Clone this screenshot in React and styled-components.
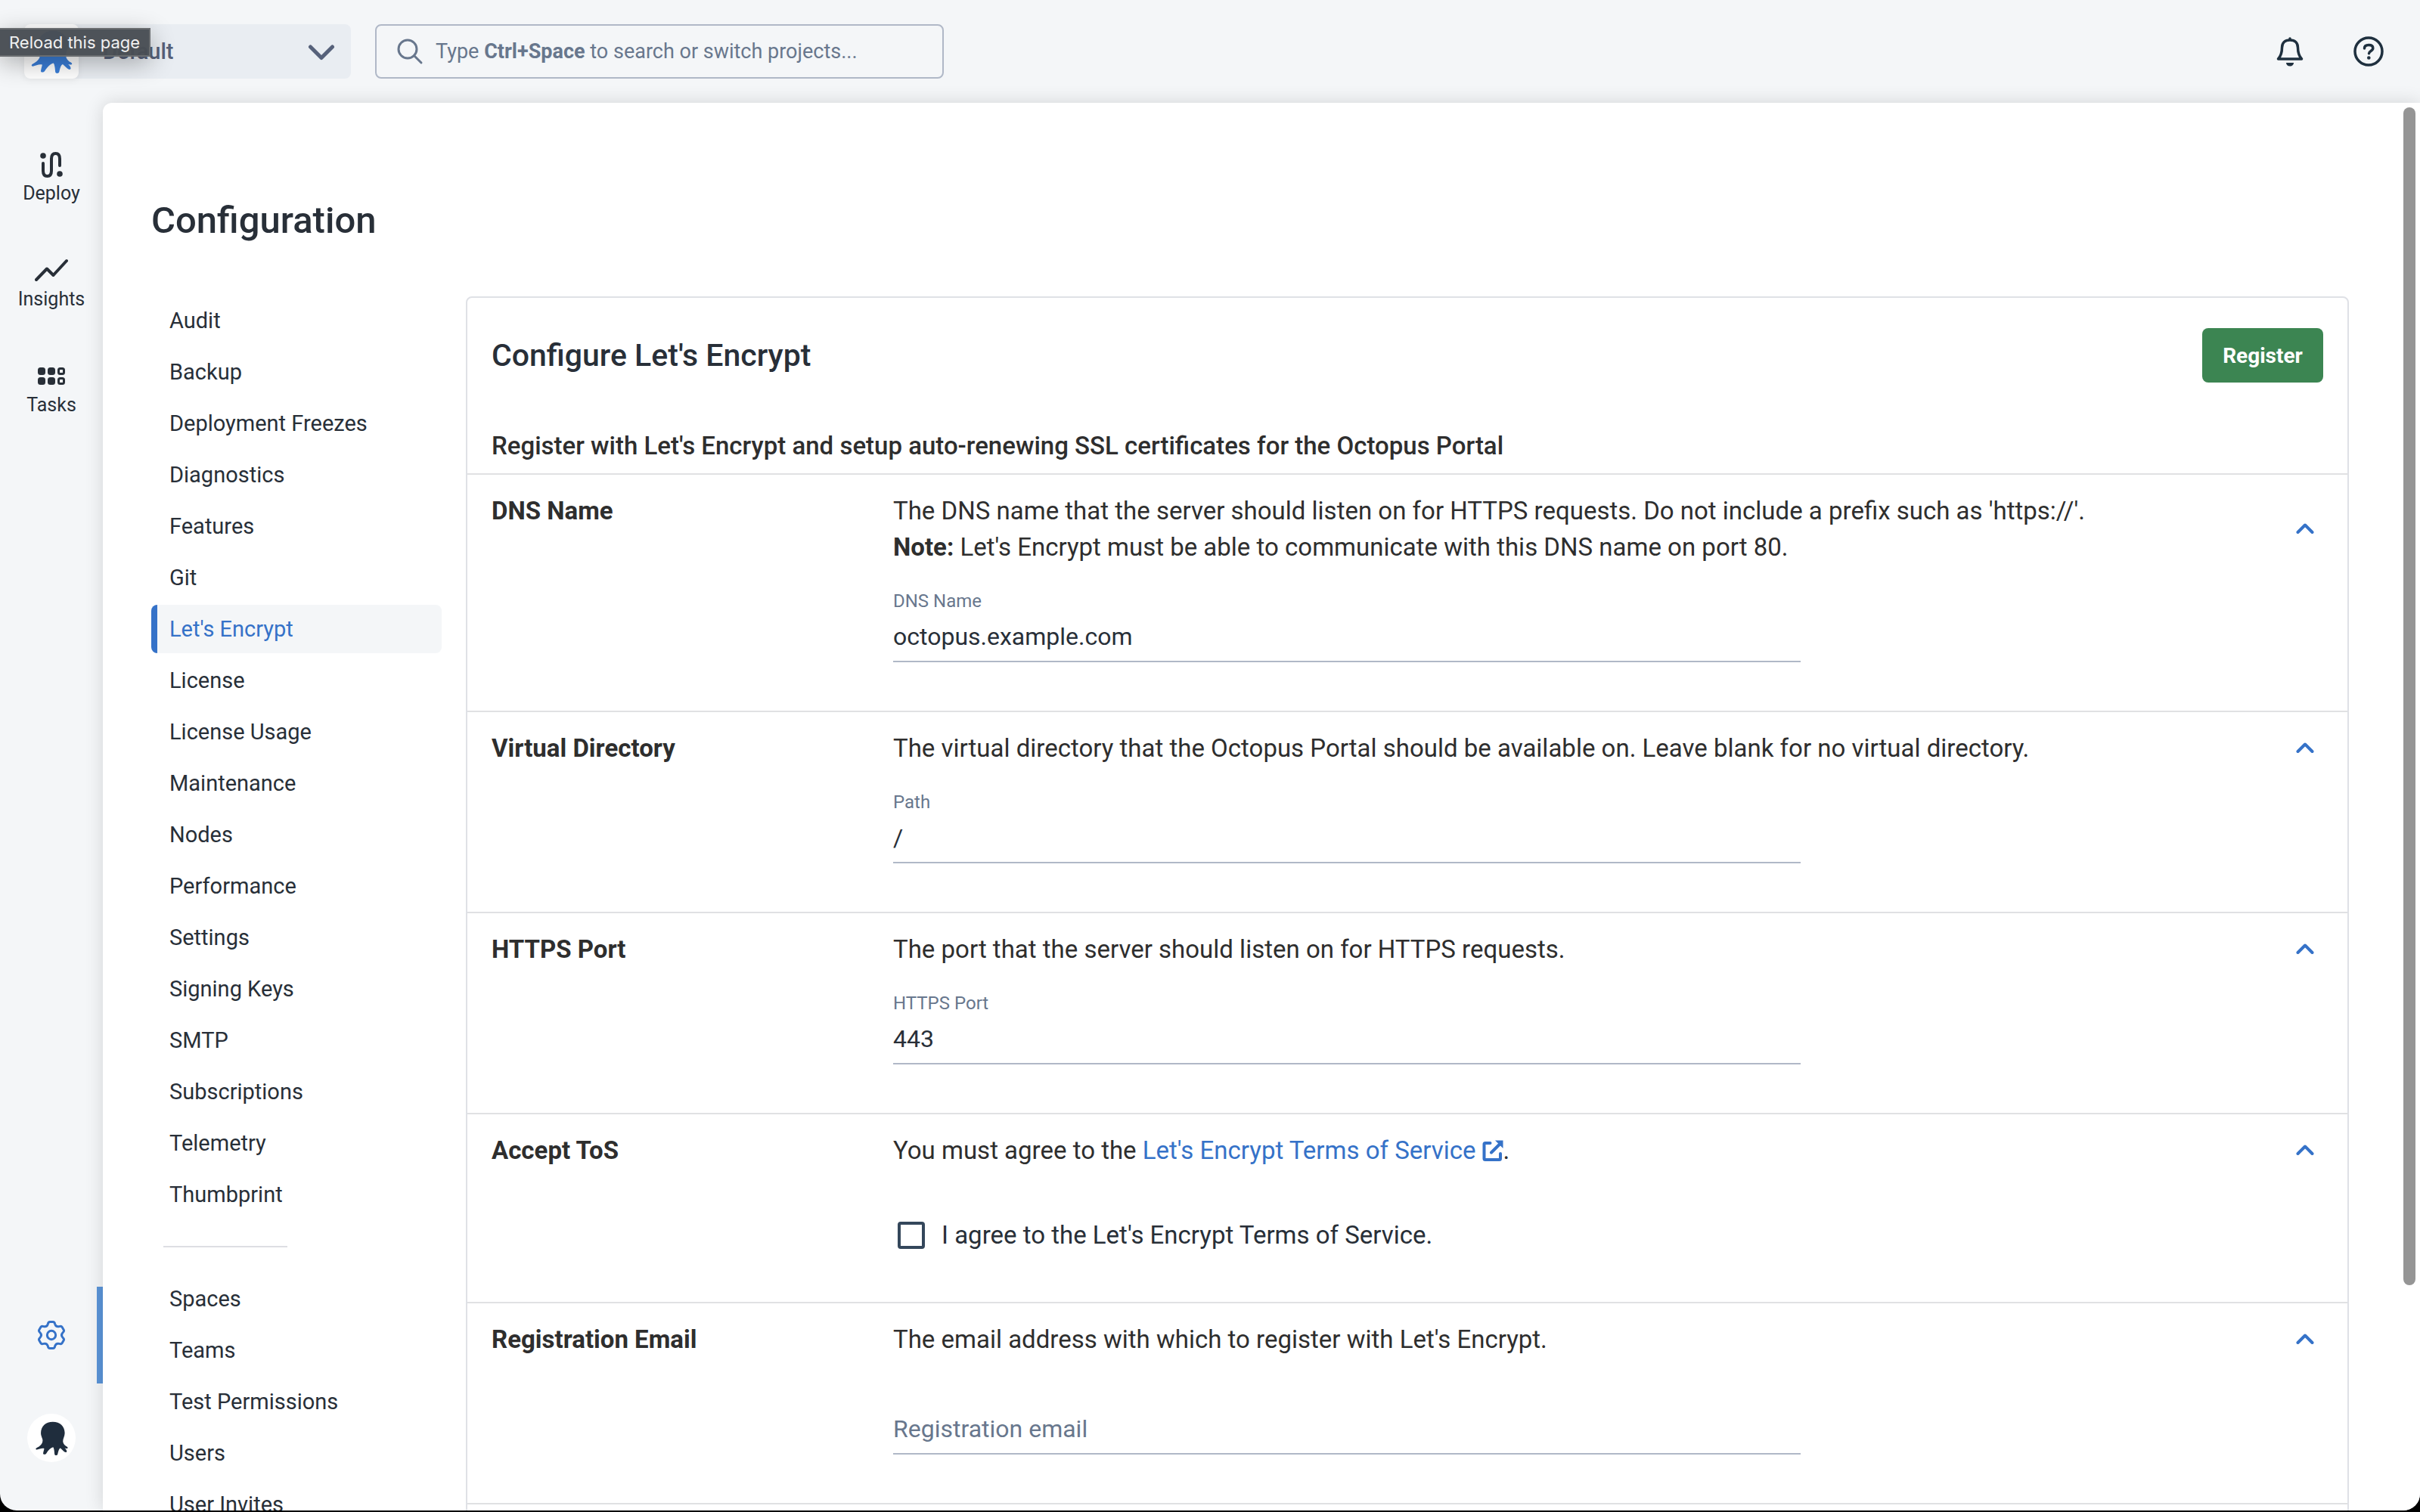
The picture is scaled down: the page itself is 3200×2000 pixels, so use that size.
import React from "react";
import styled, { createGlobalStyle } from "styled-components";

const Global = createGlobalStyle`
  * { box-sizing: border-box; }
  body { margin: 0; font-family: Roboto, sans-serif; background: #000; color: #282f38; }
  a { color: inherit; text-decoration: none; }
  button, input { font: inherit; color: inherit; }
  h1, h2, h3, p { margin: 0; }
`;

const Window = styled.div`
  position: relative;
  display: grid;
  grid-template: 136px minmax(0, 1fr) / 136px minmax(0, 1fr);
  height: calc(100vh - 2px);
  overflow: hidden;
  background: #f4f6f8;
  border-radius: 0 0 22px 22px;
`;

const Header = styled.header`
  grid-column: 1 / -1;
  display: flex;
  align-items: center;
  gap: 32px;
  padding: 0 36px 0 32px;
`;

const SpaceSwitcher = styled.button`
  display: flex;
  align-items: center;
  width: 432px;
  height: 72px;
  padding: 0 20px 0 0;
  border: 0;
  border-radius: 8px;
  background: #e9edf2;
  color: #56617a;
  font-size: 29px;
  font-weight: 500;
  text-align: left;
  > svg { margin-left: auto; }
`;

const SpaceLogo = styled.span`
  display: flex;
  align-items: center;
  justify-content: center;
  width: 72px;
  height: 72px;
  margin-right: 32px;
  border-radius: 8px;
  background: #fff;
  color: #3a7ed8;
  box-shadow: 0 2px 10px rgba(0, 0, 0, 0.06);
`;

const Search = styled.button`
  display: flex;
  align-items: center;
  gap: 16px;
  width: 752px;
  height: 72px;
  padding: 0 26px;
  border: 2px solid #b0b8c7;
  border-radius: 8px;
  background: none;
  color: #68778d;
  font-size: 27px;
`;

const HeaderActions = styled.div`
  display: flex;
  gap: 40px;
  margin-left: auto;
`;

const IconButton = styled.button`
  display: flex;
  align-items: center;
  justify-content: center;
  width: 64px;
  height: 64px;
  padding: 0;
  border: 0;
  border-radius: 50%;
  background: ${(p) => p.$fill || "none"};
  color: ${(p) => p.$color || "#1f303f"};
`;

const Tooltip = styled.div`
  position: absolute;
  left: 0;
  top: 37px;
  z-index: 2;
  height: 38px;
  padding: 0 12px;
  border: 2px solid #6a6d70;
  border-left: 0;
  background: rgba(72, 77, 84, 0.97);
  box-shadow: 0 8px 32px rgba(0, 0, 0, 0.3);
  color: #f1f1f1;
  font: 22px/34px Inter, sans-serif;
`;

const Rail = styled.nav`
  display: flex;
  flex-direction: column;
  align-items: stretch;
  padding: 30px 0 32px;
`;

const RailLink = styled.a`
  display: flex;
  flex-direction: column;
  align-items: center;
  justify-content: center;
  gap: 4px;
  height: ${(p) => (p.$active ? 128 : 140)}px;
  margin-top: ${(p) => (p.$active ? "auto" : 0)};
  border-right: ${(p) => (p.$active ? "8px solid #5b95d9" : "0")};
  padding-left: ${(p) => (p.$active ? 8 : 0)}px;
  color: ${(p) => (p.$active ? "#3572c8" : "inherit")};
  font-size: 25px;
  line-height: 32px;
`;

const Profile = styled.div`
  display: flex;
  justify-content: center;
  padding: 40px 0 32px;
`;

const Main = styled.main`
  position: relative;
  min-width: 0;
  overflow: hidden;
  padding: 128px 94px 0 64px;
  border-radius: 12px 0 0 0;
  background: #fff;
  box-shadow: 0 0 24px rgba(0, 0, 0, 0.14);
`;

const ScrollThumb = styled.div`
  position: absolute;
  top: 6px;
  right: 6px;
  width: 16px;
  height: calc(100% - 304px);
  border-radius: 8px;
  background: #959595;
`;

const PageTitle = styled.h1`
  margin-bottom: 72px;
  font-size: 49px;
  line-height: 56px;
  font-weight: 500;
`;

const Columns = styled.div`
  display: grid;
  grid-template-columns: 384px minmax(0, 1fr);
  align-items: start;
  gap: 32px;
`;

const Menu = styled.nav`
  display: flex;
  flex-direction: column;
  gap: 4px;
`;

const MenuLink = styled.a`
  height: 64px;
  padding-left: 16px;
  border-left: 8px solid ${(p) => (p.$active ? "#3572c8" : "transparent")};
  border-radius: 8px;
  background: ${(p) => (p.$active ? "#f4f6f8" : "none")};
  color: ${(p) => (p.$active ? "#3572c8" : "#282f38")};
  font-size: 29px;
  line-height: 64px;
`;

const MenuRule = styled.hr`
  width: 164px;
  height: 2px;
  margin: 32px 0 32px 16px;
  border: 0;
  background: #dddee3;
`;

const Card = styled.section`
  border: 2px solid #dfe1e6;
  border-radius: 8px 8px 0 0;
`;

const CardHeader = styled.div`
  display: flex;
  align-items: center;
  justify-content: space-between;
  height: 152px;
  padding: 0 32px;
`;

const CardTitle = styled.h2`
  font-size: 41px;
  font-weight: 500;
`;

const Primary = styled.button`
  width: 160px;
  height: 72px;
  border: 0;
  border-radius: 8px;
  background: #3c8552;
  color: #fff;
  font-size: 28px;
  font-weight: 700;
`;

const CardIntro = styled.h3`
  height: 80px;
  padding: 20px 32px 0;
  color: #2e2e2e;
  font-size: 33px;
  line-height: 48px;
  font-weight: 500;
`;

const Row = styled.section`
  display: grid;
  grid-template-columns: 499px minmax(0, 1fr) 48px;
  gap: 0 32px;
  padding: 24px 32px 64px;
  border-top: 2px solid #e0e1e3;
  color: #2e2e2e;
  font-size: 33px;
  line-height: 48px;
  strong { font-weight: 700; }
`;

const RowLabel = styled.h3`
  font-size: 33px;
  font-weight: 700;
`;

const Toggle = styled.button`
  display: flex;
  align-items: center;
  justify-content: center;
  padding: 0;
  border: 0;
  background: none;
  color: #3572c8;
`;

const Field = styled.div`
  grid-column: 2;
  display: flex;
  flex-direction: column;
  width: 1200px;
  max-width: 100%;
  padding-top: 28px;
`;

const FieldLabel = styled.label`
  height: 36px;
  color: #68778d;
  font-size: 24px;
  line-height: 38px;
`;

const TextInput = styled.input`
  width: 100%;
  height: 64px;
  padding: 0 0 2px;
  border: 0;
  border-bottom: 2px solid #b0b8c7;
  background: none;
  color: #282f38;
  font-size: 32px;
  outline: 0;
  &::placeholder { color: #68778d; opacity: 1; }
`;

const Agreement = styled.label`
  grid-column: 2;
  display: flex;
  align-items: center;
  gap: 22px;
  padding: 64px 0 0 6px;
  color: #282f38;
`;

const Checkbox = styled.input`
  appearance: none;
  width: 36px;
  height: 36px;
  margin: 0;
  border: 4px solid #34475b;
  border-radius: 4px;
`;

const TextLink = styled.a`
  color: #3572c8;
  svg { margin-left: 8px; vertical-align: -3px; }
`;

const Octopus = ({ size }) => (
  <svg width={size} height={size} viewBox="0 0 128 134" fill="currentColor" aria-hidden="true">
    <path d="M68 2C96 2 115 20 115 46C115 60 107 68 108 80C109 91 118 98 125 101C129 104 126 108 121 107L115 106C119 110 123 114 123 119C122 124 116 122 112 119L98 106C92 108 90 118 87 130C85 135 76 135 75 130C74 118 73 106 69 102C60 104 50 114 42 127C38 132 29 132 30 126C31 118 34 112 34 107C24 105 14 110 5 112C0 112 0 107 4 105C18 98 27 90 28 76C28 66 21 60 21 46C21 20 40 2 68 2Z" />
  </svg>
);

const DeployIcon = () => (
  <svg width="30" height="36" viewBox="0 -1 30 36" fill="none" stroke="currentColor" strokeWidth="4" strokeLinecap="round" aria-hidden="true">
    <path d="M4 15v10c0 5 2 7 5.500 7s5.500-2 5.500-7V9c0-5 2-7 5.500-7s5.500 2 5.500 7v9" />
    <circle cx="4" cy="5" r="3.800" fill="currentColor" stroke="none" />
    <circle cx="26" cy="29" r="3.800" fill="currentColor" stroke="none" />
  </svg>
);

const InsightsIcon = () => (
  <svg width="44" height="36" viewBox="0 0 44 36" fill="none" stroke="currentColor" strokeWidth="4" strokeLinecap="round" strokeLinejoin="round" aria-hidden="true">
    <path d="M2 30l14-14.500 8.500 8.500L42 5" />
  </svg>
);

const TasksIcon = () => (
  <svg width="38" height="36" viewBox="0 0 38 36" fill="currentColor" aria-hidden="true">
    {[6, 19].map((y) => (
      <g key={y}>
        <rect x="1" y={y} width="10" height="10" rx="3.500" />
        <rect x="14" y={y} width="10" height="10" rx="3.500" />
        <rect x="28.500" y={y + 1.5} width="7" height="7" rx="2" fill="none" stroke="currentColor" strokeWidth="3" />
      </g>
    ))}
  </svg>
);

// One tooth of the gear, repeated every 60 degrees around the centre.
const gearPath = (() => {
  const turn = (x, y, step) => {
    const a = (step * Math.PI) / 3;
    return `${(x * Math.cos(a) - y * Math.sin(a)).toFixed(1)} ${(x * Math.sin(a) + y * Math.cos(a)).toFixed(1)}`;
  };
  let d = "";
  for (let i = 0; i < 6; i += 1) {
    d += `${i ? "L" : "M"}${turn(-14, -44, i)}Q${turn(-12.500, -52.500, i)} ${turn(-6, -52.500, i)}`;
    d += `L${turn(6, -52.500, i)}Q${turn(12.500, -52.500, i)} ${turn(14, -44, i)}Q${turn(18, -31, i)} ${turn(-14, -44, i + 1)}`;
  }
  return `${d}Z`;
})();

const GearIcon = () => (
  <svg width="40" height="40" viewBox="-60 -60 120 120" fill="none" stroke="currentColor" strokeWidth="9" strokeLinejoin="round" aria-hidden="true">
    <path d={gearPath} />
    <circle r="17" />
  </svg>
);

const BellIcon = () => (
  <svg width="36" height="40" viewBox="0 0 36 40" fill="none" stroke="currentColor" strokeWidth="3.500" strokeLinejoin="round" aria-hidden="true">
    <path d="M18 5c-7 0-10.500 4-10.500 10 0 7-1.500 11-5 15h31c-3.500-4-5-8-5-15C28.500 9 25 5 18 5z" />
    <path d="M18 4V3" strokeLinecap="round" />
    <path d="M13 35h10c0 2.500-2 4.500-5 4.500s-5-2-5-4.500z" fill="currentColor" stroke="none" />
  </svg>
);

const HelpIcon = () => (
  <svg width="40" height="40" viewBox="0 0 40 40" fill="none" stroke="currentColor" strokeWidth="3.500" strokeLinecap="round" aria-hidden="true">
    <circle cx="20" cy="20" r="18" />
    <path d="M14.500 16c0-3 2.300-4.500 5.700-4.500 3.300 0 5.600 1.500 5.600 4.200 0 3.800-5.300 3.600-5.300 7" />
    <circle cx="20.300" cy="28.500" r="2.300" fill="currentColor" stroke="none" />
  </svg>
);

const SearchIcon = () => (
  <svg width="36" height="36" viewBox="0 0 36 36" fill="none" stroke="currentColor" strokeWidth="3" strokeLinecap="round" aria-hidden="true">
    <circle cx="15" cy="15" r="12" />
    <path d="M23.500 23.500l9.500 9.500" />
  </svg>
);

const ChevronDown = () => (
  <svg width="38" height="24" viewBox="0 0 38 24" fill="none" stroke="currentColor" strokeWidth="5" strokeLinecap="round" strokeLinejoin="round" aria-hidden="true">
    <path d="M4.500 6L19 20.500 33.500 6" />
  </svg>
);

const ChevronUp = () => (
  <svg width="24" height="16" viewBox="0 0 24 16" fill="none" stroke="currentColor" strokeWidth="4" strokeLinecap="round" strokeLinejoin="round" aria-hidden="true">
    <path d="M2.500 12L12 2.500l9.500 9.500" />
  </svg>
);

const ExternalIcon = () => (
  <svg width="28" height="28" viewBox="0 0 28 28" fill="none" stroke="currentColor" strokeWidth="4" strokeLinecap="round" strokeLinejoin="round" aria-hidden="true">
    <path d="M10.500 4H4Q2.500 4 2.500 5.500v19Q2.500 26 4 26h18.500q1.500 0 1.500-1.500V18M12 16.500L24 4.500" />
    <path d="M17 .5h10.500V11z" fill="currentColor" stroke="none" />
  </svg>
);

const firstLinks = ["Audit", "Backup", "Deployment Freezes", "Diagnostics", "Features", "Git", "Let's Encrypt", "License", "License Usage", "Maintenance", "Nodes", "Performance", "Settings", "Signing Keys", "SMTP", "Subscriptions", "Telemetry", "Thumbprint"];
const secondLinks = ["Spaces", "Teams", "Test Permissions", "Users", "User Invites"];

const MenuItems = ({ names }) =>
  names.map((name) => (
    <MenuLink key={name} href="#" $active={name === "Let's Encrypt"}>
      {name}
    </MenuLink>
  ));

const Setting = ({ title, help, children }) => (
  <Row>
    <RowLabel>{title}</RowLabel>
    <p>{help}</p>
    <Toggle type="button" aria-label={`Collapse ${title}`}>
      <ChevronUp />
    </Toggle>
    {children}
  </Row>
);

const TextField = ({ id, label, value, placeholder }) => (
  <Field>
    <FieldLabel htmlFor={id}>{label}</FieldLabel>
    <TextInput id={id} defaultValue={value} placeholder={placeholder} aria-label={placeholder} />
  </Field>
);

export default function App() {
  return (
    <>
      <Global />
      <Window>
        <Header>
          <SpaceSwitcher type="button">
            <SpaceLogo>
              <Octopus size={57} />
            </SpaceLogo>
            Default
            <ChevronDown />
          </SpaceSwitcher>
          <Search type="button">
            <SearchIcon />
            <span>
              Type <b>Ctrl+Space</b> to search or switch projects...
            </span>
          </Search>
          <HeaderActions>
            <IconButton type="button" aria-label="Notifications">
              <BellIcon />
            </IconButton>
            <IconButton type="button" aria-label="Help">
              <HelpIcon />
            </IconButton>
          </HeaderActions>
        </Header>
        <Tooltip role="tooltip">Reload this page</Tooltip>
        <Rail>
          <RailLink href="#">
            <DeployIcon />
            Deploy
          </RailLink>
          <RailLink href="#">
            <InsightsIcon />
            Insights
          </RailLink>
          <RailLink href="#">
            <TasksIcon />
            Tasks
          </RailLink>
          <RailLink href="#" $active aria-label="Configuration">
            <GearIcon />
          </RailLink>
          <Profile>
            <IconButton type="button" aria-label="Profile" $fill="#fff" $color="#1f2d3d">
              <Octopus size={45} />
            </IconButton>
          </Profile>
        </Rail>
        <Main>
          <PageTitle>Configuration</PageTitle>
          <Columns>
            <Menu>
              <MenuItems names={firstLinks} />
              <MenuRule />
              <MenuItems names={secondLinks} />
            </Menu>
            <Card>
              <CardHeader>
                <CardTitle>Configure Let's Encrypt</CardTitle>
                <Primary type="button">Register</Primary>
              </CardHeader>
              <CardIntro>Register with Let's Encrypt and setup auto-renewing SSL certificates for the Octopus Portal</CardIntro>
              <Setting
                title="DNS Name"
                help={
                  <>
                    The DNS name that the server should listen on for HTTPS requests. Do not include a prefix such as 'https://'.
                    <br />
                    <strong>Note:</strong> Let's Encrypt must be able to communicate with this DNS name on port 80.
                  </>
                }
              >
                <TextField id="dns" label="DNS Name" value="octopus.example.com" />
              </Setting>
              <Setting title="Virtual Directory" help="The virtual directory that the Octopus Portal should be available on. Leave blank for no virtual directory.">
                <TextField id="path" label="Path" value="/" />
              </Setting>
              <Setting title="HTTPS Port" help="The port that the server should listen on for HTTPS requests.">
                <TextField id="port" label="HTTPS Port" value="443" />
              </Setting>
              <Setting
                title="Accept ToS"
                help={
                  <>
                    You must agree to the{" "}
                    <TextLink href="#">
                      Let's Encrypt Terms of Service
                      <ExternalIcon />
                    </TextLink>
                    .
                  </>
                }
              >
                <Agreement>
                  <Checkbox type="checkbox" />
                  I agree to the Let's Encrypt Terms of Service.
                </Agreement>
              </Setting>
              <Setting title="Registration Email" help="The email address with which to register with Let's Encrypt.">
                <TextField id="email" placeholder="Registration email" />
              </Setting>
              <Row />
            </Card>
          </Columns>
          <ScrollThumb />
        </Main>
      </Window>
    </>
  );
}
